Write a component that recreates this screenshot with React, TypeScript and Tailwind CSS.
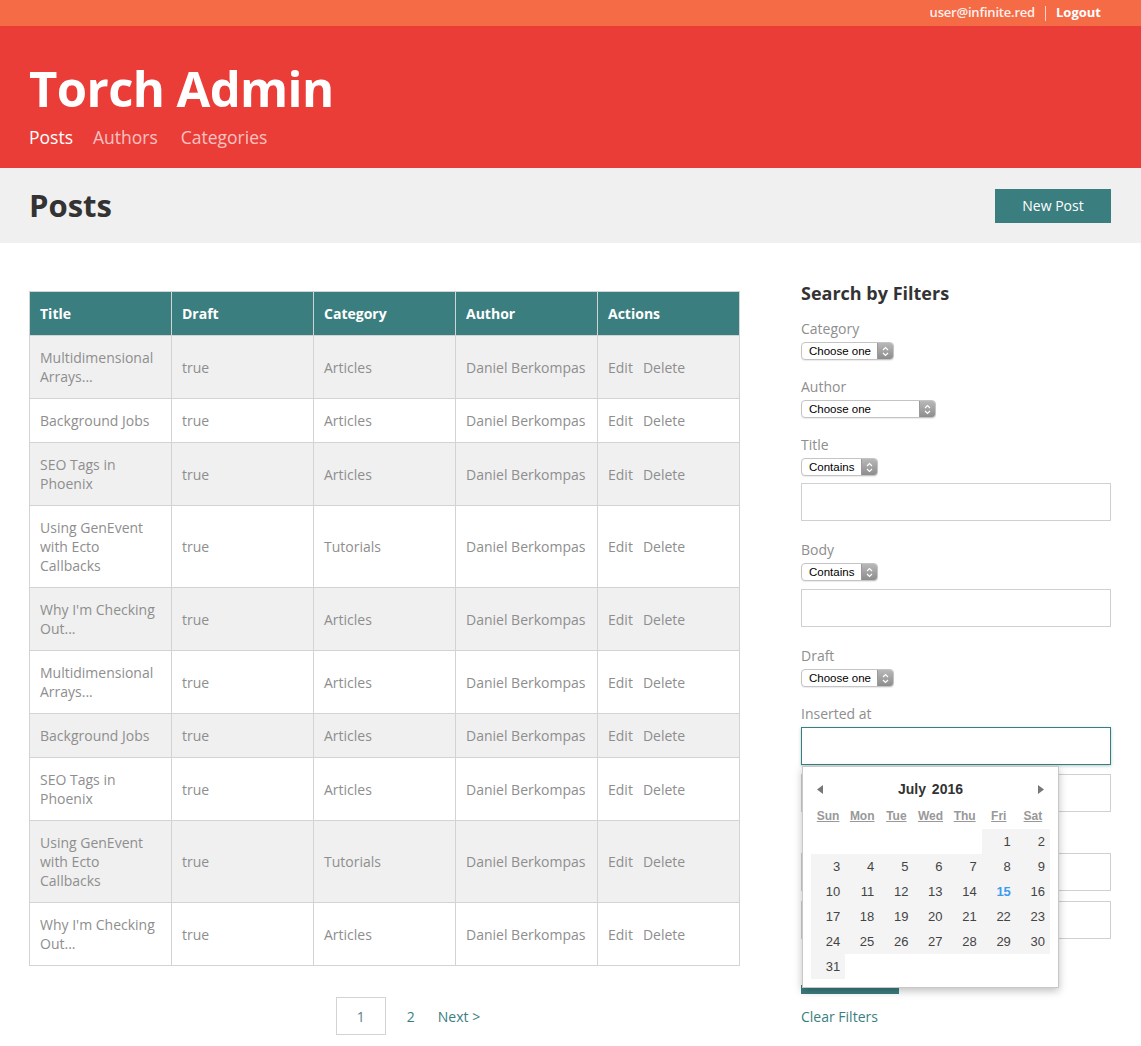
type Post = { title: string[]; category: string };

const posts: Post[] = [
  { title: ['Multidimensional', 'Arrays...'], category: 'Articles' },
  { title: ['Background Jobs'], category: 'Articles' },
  { title: ['SEO Tags in', 'Phoenix'], category: 'Articles' },
  { title: ['Using GenEvent', 'with Ecto', 'Callbacks'], category: 'Tutorials' },
  { title: ["Why I'm Checking", 'Out...'], category: 'Articles' },
  { title: ['Multidimensional', 'Arrays...'], category: 'Articles' },
  { title: ['Background Jobs'], category: 'Articles' },
  { title: ['SEO Tags in', 'Phoenix'], category: 'Articles' },
  { title: ['Using GenEvent', 'with Ecto', 'Callbacks'], category: 'Tutorials' },
  { title: ["Why I'm Checking", 'Out...'], category: 'Articles' },
];

function FakeSelect ({ label, width }: { label: string; width: string }) {
  return (
    <div
      className={`flex h-[18px] items-stretch overflow-hidden rounded-[4px] border border-[#c4c4c4] bg-white shadow-[0_1px_1px_rgba(0,0,0,0.08)] ${width}`}
    >
      <span className="flex-1 pl-[7px] text-[11.5px] leading-[16px] text-black font-['Liberation_Sans',sans-serif]">
        {label}
      </span>
      <span className="flex w-[16px] flex-col items-center justify-center border-l border-[#9a9a9a] bg-gradient-to-b from-[#b8b8b8] to-[#8d8d8d]">
        <svg width="7" height="11" viewBox="0 0 7 11">
          <path d="M1 4 L3.5 1.5 L6 4" fill="none" stroke="white" strokeWidth="1.2" />
          <path d="M1 7 L3.5 9.5 L6 7" fill="none" stroke="white" strokeWidth="1.2" />
        </svg>
      </span>
    </div>
  );
}

function Calendar () {
  const days: (number | null)[] = [null, null, null, null, null];
  for (let d = 1; d <= 31; d++) days.push(d);
  while (days.length % 7 !== 0) days.push(null);
  const weeks: (number | null)[][] = [];
  for (let i = 0; i < days.length; i += 7) weeks.push(days.slice(i, i + 7));

  return (
    <div className="absolute left-[1px] top-[39px] z-10 w-[257px] border border-[#c8c8c8] bg-white px-[8px] pb-[8px] pt-[8px] font-['Liberation_Sans',sans-serif] shadow-[0_3px_8px_rgba(0,0,0,0.25)]">
      <div className="flex h-[28px] items-center justify-between px-[6px]">
        <svg width="6" height="9" viewBox="0 0 6 9"><path d="M6 0 L0 4.5 L6 9 Z" fill="#777" /></svg>
        <span className="text-[14px] font-bold text-[#333] [word-spacing:2px]">July 2016</span>
        <svg width="6" height="9" viewBox="0 0 6 9"><path d="M0 0 L6 4.5 L0 9 Z" fill="#777" /></svg>
      </div>
      <div className="grid h-[26px] grid-cols-7 items-center">
        {['Sun', 'Mon', 'Tue', 'Wed', 'Thu', 'Fri', 'Sat'].map(d => (
          <span key={d} className="text-center text-[12px] font-bold text-[#999] underline">
            {d}
          </span>
        ))}
      </div>
      {weeks.map((w, i) => (
        <div key={i} className="grid grid-cols-7">
          {w.map((d, j) => (
            <span
              key={j}
              className={`h-[25px] pr-[5px] text-right text-[13px] leading-[25px] ${d ? 'bg-[#f4f4f4]' : ''} ${d === 15 ? 'font-bold text-[#3d9cf0]' : 'text-[#444]'}`}
            >
              {d ?? ''}
            </span>
          ))}
        </div>
      ))}
    </div>
  );
}

export default function App () {
  const cell = 'border border-[#d3d3d3] px-[10px] py-[12px] align-middle';

  return (
    <div className="min-h-[1046px] bg-white font-['Open_Sans',sans-serif] text-[14px]">
      {/* top strip */}
      <div className="flex h-[26px] items-center justify-end bg-[#f46b46] pr-[40px] text-[13px] text-white">
        <span className="font-semibold tracking-[-0.2px] opacity-90">user@infinite.red</span>
        <span className="mx-[10px] h-[15px] w-px bg-white/70" />
        <span className="font-bold">Logout</span>
      </div>

      {/* header */}
      <div className="h-[142px] bg-[#ea3d38] px-[29px] pt-[34px]">
        <h1 className="text-[49px] font-bold leading-[56px] tracking-[-0.6px] text-white">Torch Admin</h1>
        <nav className="mt-[8px] flex gap-[20px] text-[17.5px] leading-[26px]">
          <span className="text-white">Posts</span>
          <span className="text-white/70">Authors</span>
          <span className="ml-[3px] text-white/70">Categories</span>
        </nav>
      </div>

      {/* page title */}
      <div className="flex h-[75px] items-center justify-between bg-[#f0f0f0] pl-[29px] pr-[30px]">
        <h2 className="text-[31px] font-bold text-[#333]">Posts</h2>
        <button className="h-[34px] w-[116px] bg-[#3b7e80] text-[14px] text-white">New Post</button>
      </div>

      <div className="flex gap-[61px] px-[29px] pt-[48px]">
        {/* table */}
        <div className="w-[711px]">
          <table className="w-full table-fixed border-collapse leading-[19px]">
            <thead>
              <tr className="bg-[#3b7e80] text-left text-white">
                {['Title', 'Draft', 'Category', 'Author', 'Actions'].map(h => (
                  <th key={h} className="border border-[#d3d3d3] px-[10px] py-[12px] font-bold">
                    {h}
                  </th>
                ))}
              </tr>
            </thead>
            <tbody className="text-[#8e8e8e]">
              {posts.map((p, i) => (
                <tr key={i} className={i % 2 === 0 ? 'bg-[#f0f0f0]' : 'bg-white'}>
                  <td className={cell}>
                    {p.title.map((t, k) => (
                      <div key={k}>{t}</div>
                    ))}
                  </td>
                  <td className={cell}>true</td>
                  <td className={cell}>{p.category}</td>
                  <td className={cell}>Daniel Berkompas</td>
                  <td className={cell}>
                    <span>Edit</span>
                    <span className="ml-[10px]">Delete</span>
                  </td>
                </tr>
              ))}
            </tbody>
          </table>

          <div className="mt-[31px] flex items-center justify-center pl-[47px]">
            <span className="flex h-[38px] w-[50px] items-center justify-center border border-[#d3d3d3] text-[#5d7f86]">1</span>
            <span className="ml-[21px] text-[#3b7e80]">2</span>
            <span className="ml-[23px] text-[#3b7e80]">Next &gt;</span>
          </div>
        </div>

        {/* filters */}
        <div className="-mt-[10px] w-[310px] text-[#8e8e8e]">
          <h3 className="text-[18px] font-bold leading-[24px] text-[#333]">Search by Filters</h3>

          <div className="mt-[14px] leading-[20px]">Category</div>
          <div className="mt-[3px]"><FakeSelect label="Choose one" width="w-[93px]" /></div>

          <div className="mt-[17px] leading-[20px]">Author</div>
          <div className="mt-[3px]"><FakeSelect label="Choose one" width="w-[135px]" /></div>

          <div className="mt-[17px] leading-[20px]">Title</div>
          <div className="mt-[3px]"><FakeSelect label="Contains" width="w-[77px]" /></div>
          <div className="mt-[7px] h-[38px] border border-[#d0d0d0] bg-white" />

          <div className="mt-[19px] leading-[20px]">Body</div>
          <div className="mt-[3px]"><FakeSelect label="Contains" width="w-[77px]" /></div>
          <div className="mt-[8px] h-[38px] border border-[#d0d0d0] bg-white" />

          <div className="mt-[19px] leading-[20px]">Draft</div>
          <div className="mt-[3px]"><FakeSelect label="Choose one" width="w-[93px]" /></div>

          <div className="mt-[17px] leading-[20px]">Inserted at</div>
          <div className="relative mt-[3px]">
            <div className="h-[38px] border border-[#3b7e80] bg-white shadow-[0_1px_3px_rgba(59,126,128,0.4)]" />
            <Calendar />
            <div className="mt-[9px] h-[38px] border border-[#d0d0d0] bg-white" />
            <div className="mt-[41px] h-[38px] border border-[#d0d0d0] bg-white" />
            <div className="mt-[10px] h-[38px] border border-[#d0d0d0] bg-white" />
            <div className="mt-[46px] h-[9px] w-[98px] bg-[#3b7e80]" />
          </div>
          <div className="mt-[12px] text-[#3b7e80]">Clear Filters</div>
        </div>
      </div>
    </div>
  );
}
